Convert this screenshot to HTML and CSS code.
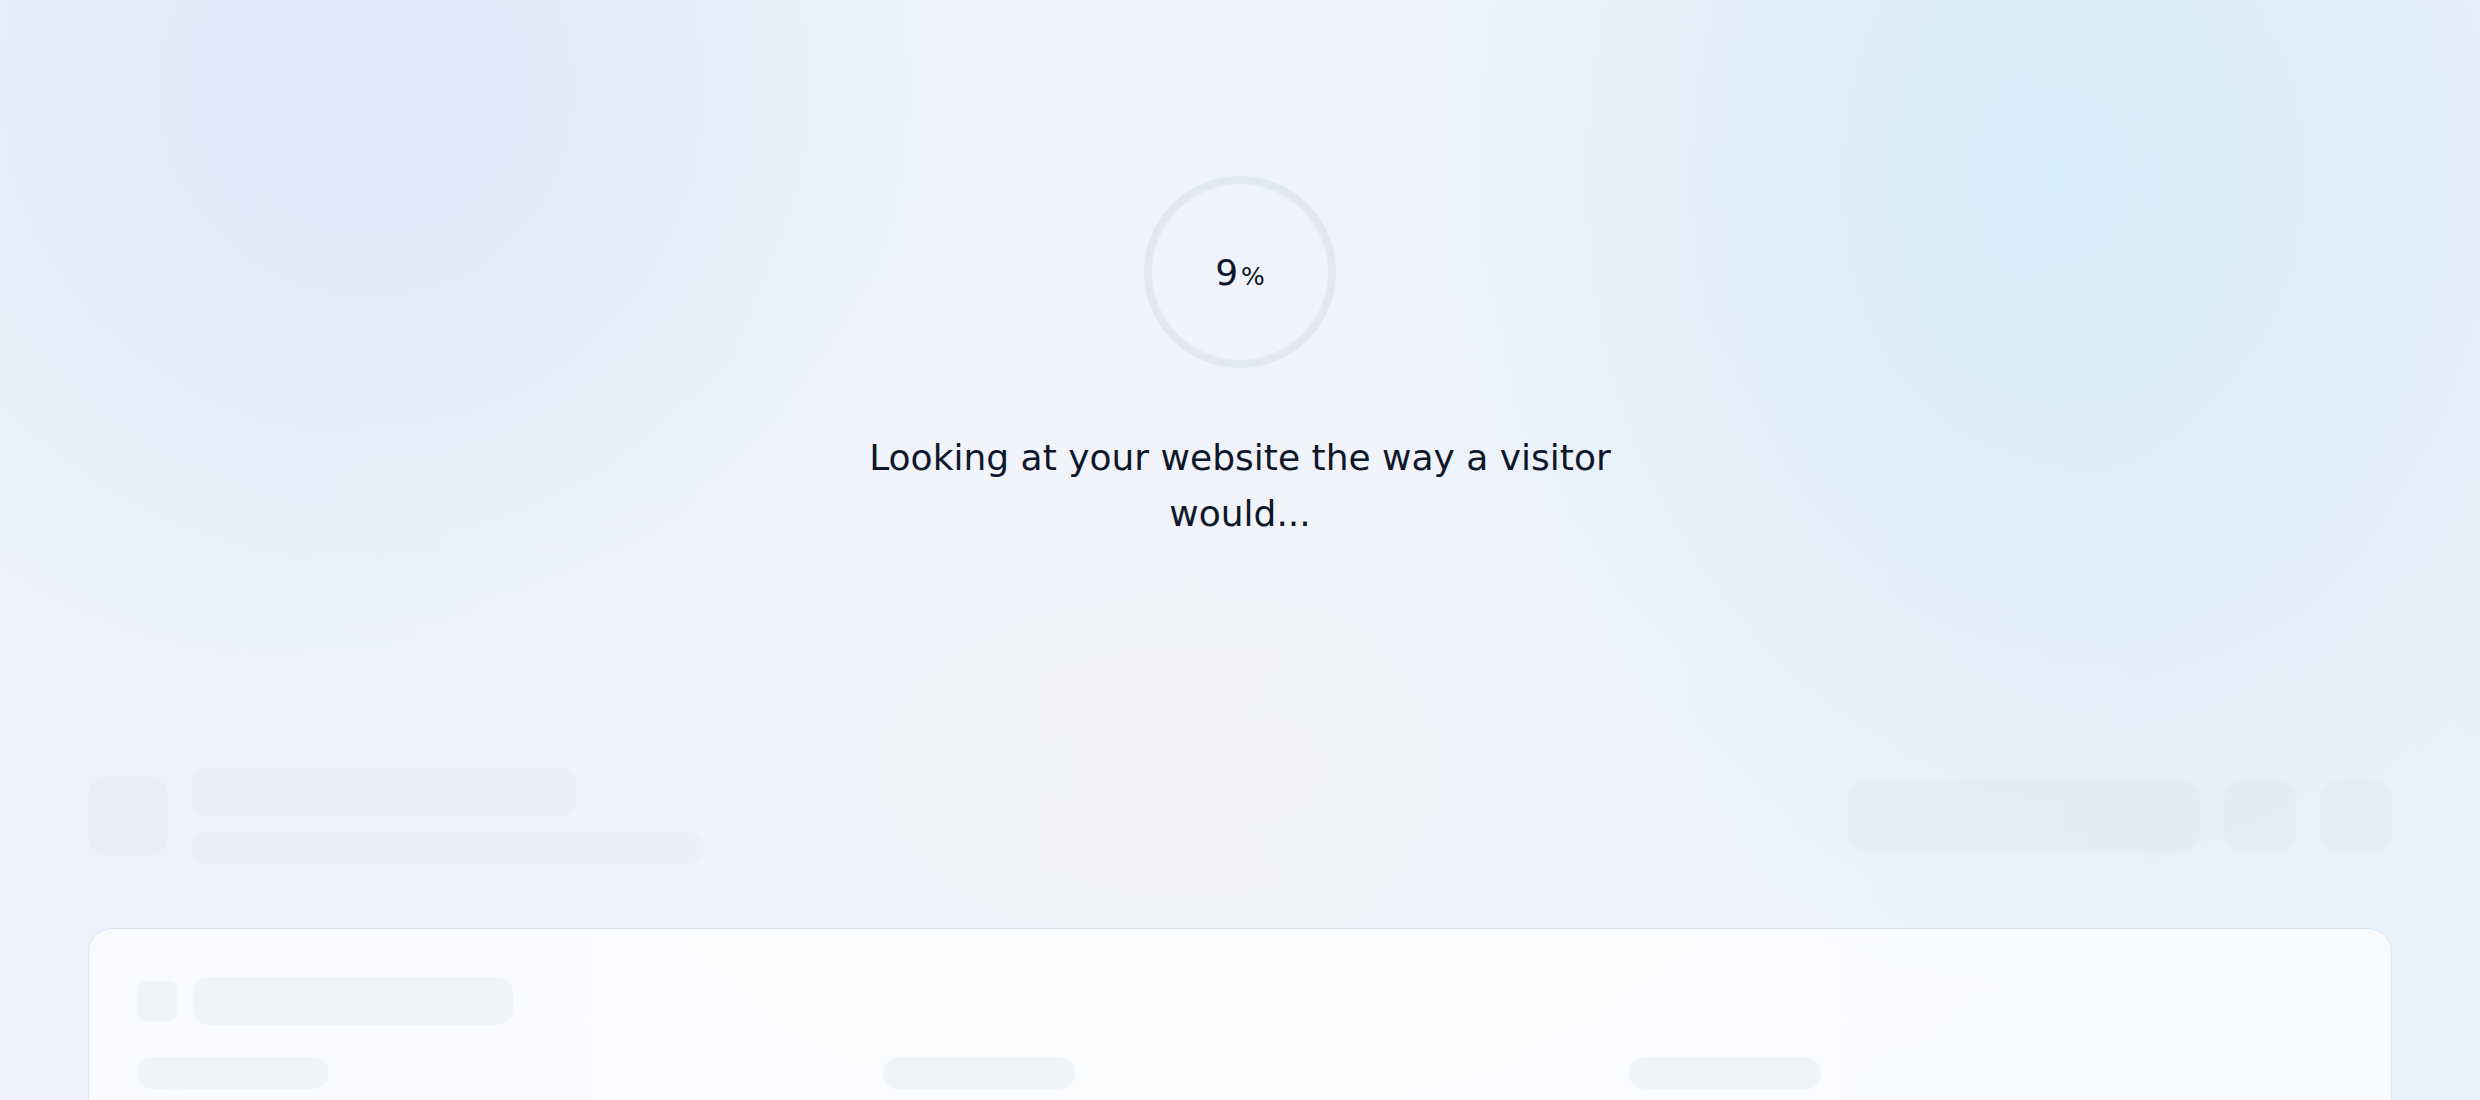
FILE: index.html
```html
<!DOCTYPE html>
<html lang="en">
<head>
<meta charset="utf-8">
<title>Analyzing</title>
<link rel="stylesheet" href="styles.css">
</head>
<body>
<div class="page">
  <section class="loader">
    <div class="ring">
      <span class="pct"><span class="num">9</span><span class="sign">%</span></span>
    </div>
    <p class="message">Looking at your website the way a visitor would...</p>
  </section>

  <section class="dash">
    <div class="dash-head">
      <div class="head-left">
        <div class="sk sk-avatar"></div>
        <div class="head-lines">
          <div class="sk sk-title"></div>
          <div class="sk sk-sub"></div>
        </div>
      </div>
      <div class="head-right">
        <div class="sk sk-search"></div>
        <div class="sk sk-btn"></div>
        <div class="sk sk-btn"></div>
      </div>
    </div>

    <div class="card">
      <div class="card-head">
        <div class="sk2 sk-icon"></div>
        <div class="sk2 sk-card-title"></div>
      </div>
      <div class="card-grid">
        <div class="sk2 sk-pill"></div>
        <div class="sk2 sk-pill"></div>
        <div class="sk2 sk-pill"></div>
      </div>
    </div>
  </section>
</div>
</body>
</html>
```

FILE: styles.css
```css
html, body {
  margin: 0;
  padding: 0;
}

body {
  font-family: "DejaVu Sans", "Noto Sans", sans-serif;
  color: #0f172a;
  background-color: #eef2fa;
  background-image:
    radial-gradient(ellipse 620px 600px at 15% 8%, rgba(221, 233, 251, 0.95) 0%, rgba(221, 233, 251, 0.6) 40%, rgba(221, 233, 251, 0) 100%),
    radial-gradient(ellipse 640px 820px at 83% 16%, rgba(216, 237, 250, 1) 0%, rgba(216, 237, 250, 0.6) 45%, rgba(216, 237, 250, 0) 100%),
    radial-gradient(ellipse 1000px 560px at 48% 70%, rgba(243, 244, 248, 0.85) 0%, rgba(243, 244, 248, 0.4) 50%, rgba(243, 244, 248, 0) 100%),
    linear-gradient(90deg, #ecf1fb 0%, #eff3fb 48%, #e9f1fb 100%);
}

.page {
  height: 1100px;
  overflow: hidden;
  display: flex;
  flex-direction: column;
}

.loader {
  display: flex;
  flex-direction: column;
  align-items: center;
  padding-top: 176px;
}

.ring {
  width: 192px;
  height: 192px;
  box-sizing: border-box;
  border: 8px solid #e2e8f0;
  border-radius: 50%;
  display: flex;
  align-items: center;
  justify-content: center;
}

.pct {
  display: inline-flex;
  align-items: baseline;
  color: #0f172a;
}

.num {
  font-size: 36px;
}

.sign {
  font-size: 25px;
  margin-left: 3px;
}

.message {
  margin: 62px 0 0;
  max-width: 800px;
  font-size: 36px;
  line-height: 56px;
  text-align: center;
  color: #0f172a;
}

.dash {
  padding: 0 88px;
  margin-top: 226px;
}

.dash-head {
  height: 96px;
  display: flex;
  align-items: center;
  justify-content: space-between;
}

.head-left {
  display: flex;
  align-items: center;
  gap: 24px;
}

.head-lines {
  display: flex;
  flex-direction: column;
  gap: 16px;
}

.head-right {
  display: flex;
  align-items: center;
  gap: 24px;
}

.sk {
  background: rgba(203, 213, 225, 0.12);
}

.sk-avatar {
  width: 80px;
  height: 80px;
  border-radius: 20px;
}

.sk-title {
  width: 384px;
  height: 48px;
  border-radius: 16px;
}

.sk-sub {
  width: 512px;
  height: 32px;
  border-radius: 16px;
}

.sk-search {
  width: 352px;
  height: 72px;
  border-radius: 20px;
}

.sk-btn {
  width: 72px;
  height: 72px;
  border-radius: 20px;
}

.card {
  margin-top: 64px;
  border: 1px solid #dde5ef;
  border-radius: 24px;
  background: rgba(255, 255, 255, 0.66);
  padding: 48px;
  height: 600px;
}

.card-head {
  display: flex;
  align-items: center;
  gap: 16px;
}

.sk2 {
  background: #f1f4f9;
}

.sk-icon {
  width: 40px;
  height: 40px;
  border-radius: 8px;
}

.sk-card-title {
  width: 320px;
  height: 48px;
  border-radius: 16px;
}

.card-grid {
  margin-top: 32px;
  display: grid;
  grid-template-columns: repeat(3, 1fr);
  gap: 32px;
}

.sk-pill {
  width: 192px;
  height: 32px;
  border-radius: 16px;
}
```
